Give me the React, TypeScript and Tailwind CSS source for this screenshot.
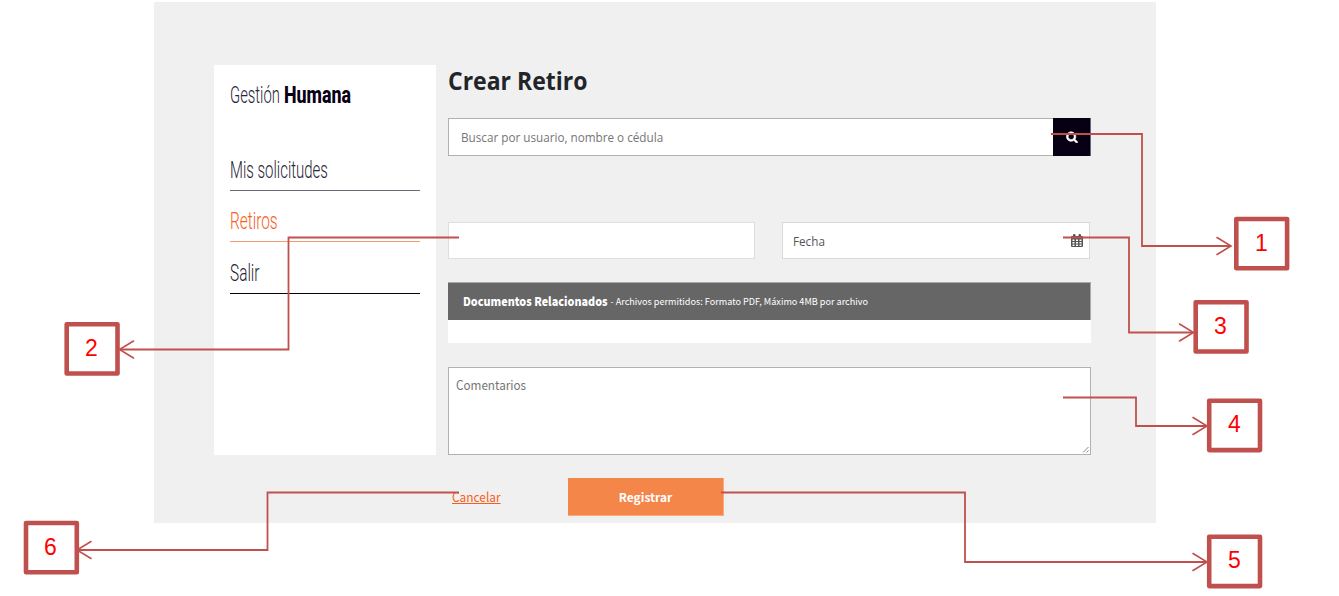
import React from "react";

type Callout = { n: number; box: string; x: number; y: number; line: string; head: string };

const callouts: Callout[] = [
  { n: 1, box: "left-[1234px] top-[217px]", x: 1236.3, y: 219, line: "M1051 134H1142V246H1231", head: "M1217 237.5L1231 246L1217 254.5" },
  { n: 2, box: "left-[64px] top-[322px]", x: 66.7, y: 324.2, line: "M459 237.5H288.5V349.5H120", head: "M133.500 341L119.500 349.500L133.500 358" },
  { n: 3, box: "left-[1193px] top-[300px]", x: 1195.7, y: 302.2, line: "M1063 237.5H1129V332.5H1193", head: "M1179.500 324L1193.500 332.500L1179.500 341" },
  { n: 4, box: "left-[1207px] top-[398px]", x: 1209.2, y: 400.8, line: "M1063 397.5H1136V426H1207", head: "M1193 417.500L1207 426L1193 434.500" },
  { n: 5, box: "left-[1207px] top-[534px]", x: 1209.2, y: 536.8, line: "M721 492.5H965V562H1207", head: "M1193 553.500L1207 562L1193 570.500" },
  { n: 6, box: "left-[23px] top-[521px]", x: 26, y: 523, line: "M459 492.5H267.500V550H78", head: "M91 541.500L77 550L91 558.500" },
];

function SearchIcon() {
  return (
    <svg width="12" height="12" viewBox="0 0 1792 1792" fill="currentColor" stroke="currentColor" strokeWidth="90">
      <path d="M1216 832q0-185-131.5-316.5t-316.5-131.5-316.5 131.5-131.5 316.5 131.5 316.5 316.5 131.5 316.5-131.5 131.5-316.5zm512 832q0 52-38 90t-90 38q-54 0-90-38l-343-342q-179 124-399 124-143 0-273.500-55.500t-225-150-150-225-55.500-273.500 55.500-273.500 150-225 225-150 273.500-55.500 273.500 55.500 225 150 150 225 55.500 273.500q0 220-124 399l343 343q37 37 37 90z" />
    </svg>
  );
}

function CalendarIcon() {
  return (
    <svg width="12" height="14" viewBox="0 0 12 14" fill="#555">
      <path
        fillRule="evenodd"
        d="M1 2H2V1Q2 0 3 0H3.500Q4.500 0 4.500 1V2H7.500V1Q7.500 0 8.500 0H9Q10 0 10 1V2H11Q12 2 12 3V12Q12 13 11 13H1Q0 13 0 12V3Q0 2 1 2ZM1.500 5.400V7H3.500V5.400ZM5 5.400V7H7V5.400ZM8.500 5.400V7H10.500V5.400ZM1.500 8.100V9.500H3.500V8.100ZM5 8.100V9.500H7V8.100ZM8.500 8.100V9.500H10.500V8.100ZM1.500 10.600V11.900H3.500V10.600ZM5 10.600V11.900H7V10.600ZM8.500 10.600V11.900H10.500V10.600Z"
      />
    </svg>
  );
}

function Sidebar() {
  return (
    <aside className="h-[390px] w-[222px] shrink-0 bg-white px-4 pt-[17px] font-['Roboto','Liberation_Sans',sans-serif] text-[#070014]">
      <h2 className="flex h-7 items-center whitespace-nowrap text-[23px]">
        <span className="w-[54px] shrink-0">
          <span className="inline-block origin-left scale-x-[0.645] font-light text-[#2a2535]">Gestión</span>
        </span>
        <span className="inline-block origin-left scale-x-[0.775] font-extrabold">Humana</span>
      </h2>
      <nav className="mt-[29px] text-[23px] font-light leading-[32px] text-[#2a2535]">
        <a className="flex h-[52px] items-center border-b border-[#6c6875] pt-3">
          <span className="inline-block origin-left scale-x-[0.65] whitespace-nowrap">Mis solicitudes</span>
        </a>
        <a className="flex h-[51px] items-center border-b border-[#f79a6c] pt-3 text-[#f95d1b]">
          <span className="inline-block origin-left scale-x-[0.67] whitespace-nowrap">Retiros</span>
        </a>
        <a className="flex h-[52px] items-center border-b border-[#070014] pt-3">
          <span className="inline-block origin-left scale-x-[0.67] whitespace-nowrap">Salir</span>
        </a>
      </nav>
    </aside>
  );
}

function RetiroForm() {
  return (
    <main className="flex w-[643px] flex-col">
      <h1 className="h-[53px] origin-left scale-x-[0.92] whitespace-nowrap font-['Open_Sans','Noto_Sans',sans-serif] text-[25px] font-bold leading-[31px] text-[#212529]">
        Crear Retiro
      </h1>
      <div className="flex h-[38px] shrink-0">
        <div className="flex flex-1 items-center border border-r-0 border-[#b1b1b1] bg-white pl-3 pt-0.5 font-['Open_Sans','Noto_Sans',sans-serif] text-[13px] text-[#757575]">
          <span className="inline-block origin-left scale-x-[0.9]">Buscar por usuario, nombre o cédula</span>
        </div>
        <button className="flex w-[38px] items-center justify-center border-r border-[#6a6672] bg-[#070014] text-white">
          <SearchIcon />
        </button>
      </div>
      <div className="mt-[66px] flex h-[37px] shrink-0 gap-[27px]">
        <div className="w-[307px] border border-[#dedede] bg-white" />
        <div className="flex w-[308px] items-center justify-between border border-[#dadada] bg-white pl-[10px] pr-[6px] font-['Open_Sans','Noto_Sans',sans-serif] text-[13px] text-[#555]">
          <span className="inline-block origin-left scale-x-[0.9] pt-0.5">Fecha</span>
          <CalendarIcon />
        </div>
      </div>
      <section className="mt-[23px] h-[61px] shrink-0 bg-white">
        <div className="flex h-[38px] items-center whitespace-nowrap border-r border-t border-[#a9a9a9] bg-[#666] pl-[15px] font-['Noto_Sans_CJK_SC',sans-serif] text-white">
          <span className="w-[147.500px] shrink-0 pb-[5px]">
            <b className="inline-block origin-left scale-x-[0.9] text-[12px] font-black">Documentos Relacionados</b>
          </span>
          <span className="text-[9.100px]">- Archivos permitidos: Formato PDF, Máximo 4MB por archivo</span>
        </div>
      </section>
      <div className="mt-6 flex h-[88px] shrink-0 items-start justify-between border border-[#b1b1b1] bg-white pl-[7px] font-['Noto_Sans_CJK_SC',sans-serif] text-[13px] leading-[20px] text-[#757575]">
        <span className="inline-block origin-left scale-x-[0.9] pt-[7px]">Comentarios</span>
        <svg width="8" height="8" viewBox="0 0 8 8" className="self-end" stroke="#777" strokeWidth="0.9">
          <path d="M1 6.500L6.500 1M4.500 6.500L6.500 4.500" />
        </svg>
      </div>
      <div className="mt-[23px] flex h-[38px] shrink-0 items-center font-['Noto_Sans_CJK_SC',sans-serif] text-[13px]">
        <span className="ml-1 w-[116px]">
          <a className="inline-block origin-left scale-x-[0.915] text-[#f95d1b] underline">Cancelar</a>
        </span>
        <button className="h-[38px] w-[156px] border-b border-r border-[#f9ab80] bg-[#f5864a] text-[12px] font-bold text-white">
          Registrar
        </button>
      </div>
    </main>
  );
}

function Annotations() {
  return (
    <div className="pointer-events-none absolute inset-0">
      <svg width="1339" height="596" className="absolute inset-0" fill="none" stroke="#c0504d">
        {callouts.map((c) => (
          <g key={c.n}>
            <path d={c.line} strokeWidth="1.8" />
            <path d={c.head} strokeWidth="1.6" strokeLinecap="round" />
            <rect x={c.x} y={c.y} width="50.800" height="49.300" fill="white" strokeWidth="4.600" strokeLinejoin="round" />
          </g>
        ))}
      </svg>
      {callouts.map((c) => (
        <div
          key={c.n}
          className={`absolute ${c.box} flex h-[53px] w-[55px] items-center justify-center pb-px font-['Liberation_Sans',sans-serif] text-[23px] text-[#ff0000]`}
        >
          {c.n}
        </div>
      ))}
    </div>
  );
}

export default function App() {
  return (
    <div className="relative h-[596px] w-[1339px] overflow-hidden bg-white pl-[154px] pt-[2px]">
      <div className="flex h-[521px] w-[1002px] gap-3 bg-[#f0f0f0] pl-[60px] pt-[63px]">
        <Sidebar />
        <RetiroForm />
      </div>
      <Annotations />
    </div>
  );
}
